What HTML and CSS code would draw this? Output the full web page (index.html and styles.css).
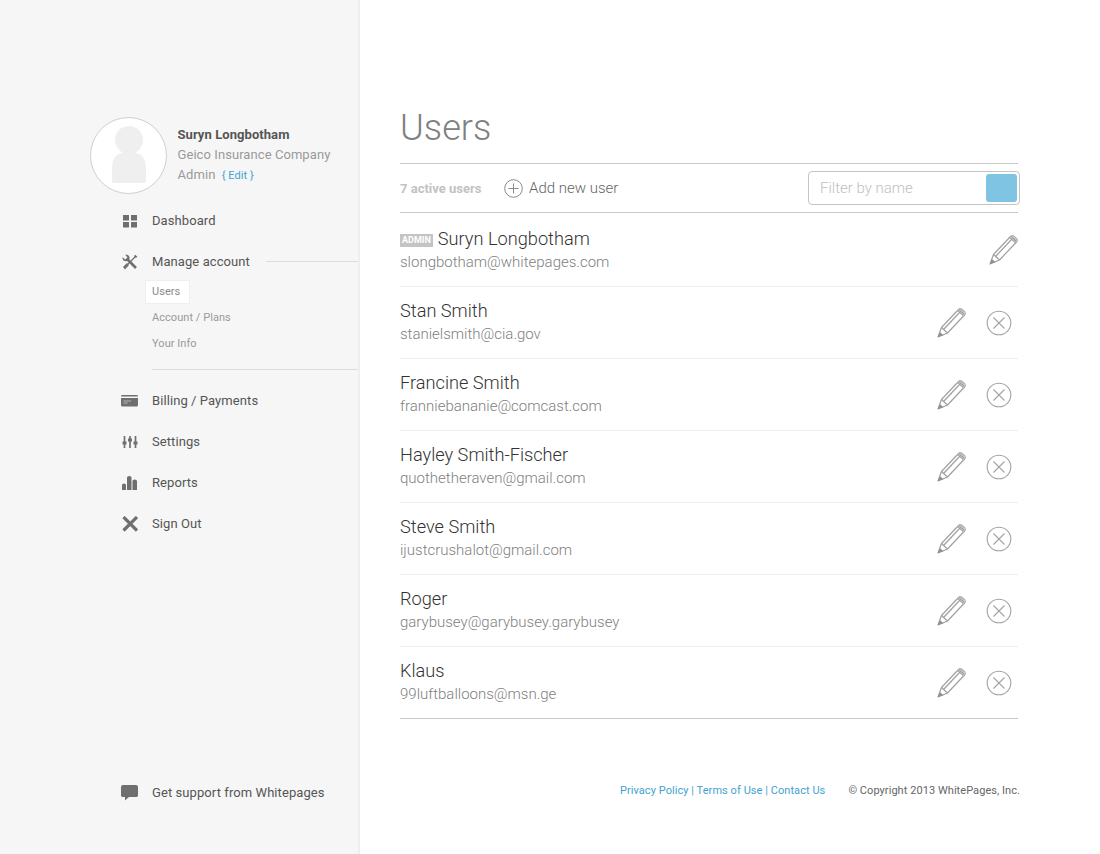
FILE: index.html
```html
<!DOCTYPE html>
<html lang="en">
<head>
    <meta charset="UTF-8">
    <title>Users</title>
    <link rel="stylesheet" href="styles.css">
</head>
<body>
    <svg class="defs" width="0" height="0">
        <symbol id="pencil" viewBox="0 0 30 32">
            <path d="M1 31 L4.500 21.500 L21.500 3.500 Q23 2 24.500 3 L27.800 6 Q29 7.500 27.500 9 L10.500 27 Z" fill="#fff" stroke="#a0a0a0" stroke-width="1.200" stroke-linejoin="round"/>
            <path d="M4.500 21.500 L10.500 27 M7 23 L22.500 6.500" fill="none" stroke="#a0a0a0" stroke-width="1.200"/>
            <path d="M20.500 4.500 L26.500 10 L28 8.500 Q29 7.500 27.800 6 L24.500 3 Q23 2 21.500 3.500 Z" fill="#c4c4c4"/>
            <path d="M20.500 4.500 L26.500 10 M22.300 3.800 L27.300 8.500" fill="none" stroke="#8f8f8f" stroke-width="0.900"/>
            <path d="M1 31 L2.800 26 L6.500 29.200 Z" fill="#8f8f8f"/>
        </symbol>
        <symbol id="remove" viewBox="0 0 26 26">
            <circle cx="13" cy="13" r="11.800" fill="none" stroke="#a3a3a3" stroke-width="1.100"/>
            <path d="M7.500 7.500 L18.500 18.500 M18.500 7.500 L7.500 18.500" fill="none" stroke="#a3a3a3" stroke-width="1.100"/>
        </symbol>
    </svg>

    <div class="layout">
        <aside class="sidebar">
            <div class="profile">
                <div class="avatar">
                    <svg width="75" height="75" viewBox="0 0 75 75">
                        <circle cx="38" cy="22" r="14" fill="#efefef"/>
                        <path d="M21 63 Q21 65 23 65 H53 Q55 65 55 63 V50 Q55 34 38 34 Q21 34 21 50 Z" fill="#efefef"/>
                    </svg>
                </div>
                <div class="profileText">
                    <div class="profileName">Suryn Longbotham</div>
                    <div class="profileLine">Geico Insurance Company</div>
                    <div class="profileLine">Admin <a class="editLink">{ Edit }</a></div>
                </div>
            </div>

            <nav class="nav">
                <a class="navItem">
                    <svg class="navIcon" viewBox="0 0 16 16"><path d="M1 2h6v5.500H1zM9 2h6v5.500H9zM1 9h6v5.500H1zM9 9h6v5.500H9z" fill="#6f6f6f"/></svg>
                    Dashboard
                </a>
                <a class="navItem navOpen">
                    <svg class="navIcon" viewBox="0 0 16 16">
                        <path d="M5 5 L14 14" stroke="#6f6f6f" stroke-width="2.600"/>
                        <path d="M0.500 3 L3 5.500 L5.500 3.500 L3.200 0.800 Q6.500 0 7.500 3 Q8 5 6.500 6.500 Q3.500 8 1.500 6.500 Q0.300 5 0.500 3 Z" fill="#6f6f6f"/>
                        <path d="M2.500 13.500 L13.500 2.500" stroke="#6f6f6f" stroke-width="1.300"/>
                        <path d="M1 13 L3 15.500 L7 11 L5 9 Z" fill="#6f6f6f"/>
                        <path d="M13 0.800 L15.300 2.500 L14 4 L12 2.300 Z" fill="#6f6f6f"/>
                    </svg>
                    Manage account
                </a>
                <div class="subNav">
                    <a class="subItem subActive">Users</a>
                    <a class="subItem">Account / Plans</a>
                    <a class="subItem">Your Info</a>
                </div>
                <a class="navItem">
                    <svg class="navIcon wideIcon" viewBox="0 0 17 16">
                        <path d="M1.500 2 H15.500 Q17 2 17 3 V3.500 H0 V3 Q0 2 1.500 2 Z" fill="#6f6f6f"/>
                        <path d="M0 5 H17 V12 Q17 13.500 15.500 13.500 H1.500 Q0 13.500 0 12 Z" fill="#6f6f6f"/>
                        <path d="M2.500 8 H10 M2.500 10 H6.500" stroke="#b5b5b5" stroke-width="1"/>
                    </svg>
                    Billing / Payments
                </a>
                <a class="navItem">
                    <svg class="navIcon" viewBox="0 0 16 16">
                        <path d="M2.500 2 V14 M8 2 V14 M13.500 2 V14" stroke="#6f6f6f" stroke-width="1.700"/>
                        <path d="M0.500 7.500 H4.500 V10.500 H0.500 Z M6 4.500 H10 V7.500 H6 Z M11.500 7.500 H15.500 V10.500 H11.500 Z" fill="#6f6f6f"/>
                    </svg>
                    Settings
                </a>
                <a class="navItem">
                    <svg class="navIcon" viewBox="0 0 16 16">
                        <path d="M0 10 Q0 8.500 2 8.500 Q4 8.500 4 10 V15 H0 Z M5 2.500 Q5 1 7.200 1 Q9.500 1 9.500 2.500 V15 H5 Z M10.500 6 Q10.500 4.500 12.700 4.500 Q15 4.500 15 6 V15 H10.500 Z" fill="#6f6f6f"/>
                    </svg>
                    Reports
                </a>
                <a class="navItem">
                    <svg class="navIcon" viewBox="0 0 16 16"><path d="M1.500 1 L15 14.500 M15 1 L1.500 14.500" stroke="#6f6f6f" stroke-width="3.200"/></svg>
                    Sign Out
                </a>
            </nav>

            <a class="navItem support">
                <svg class="navIcon wideIcon" viewBox="0 0 17 16"><path d="M2 0 H15 Q17 0 17 2 V10.500 Q17 12 15 12 H8 L4 15.500 V12 H2 Q0 12 0 10.500 V2 Q0 0 2 0 Z" fill="#6f6f6f"/></svg>
                Get support from Whitepages
            </a>
        </aside>

        <main class="content">
            <h1 class="pageTitle">Users</h1>

            <div class="toolbar">
                <span class="activeCount">7 active users</span>
                <a class="addUser">
                    <svg width="19" height="19" viewBox="0 0 19 19">
                        <circle cx="9.500" cy="9.500" r="8.800" fill="none" stroke="#8a8a8a" stroke-width="1"/>
                        <path d="M9.500 4.500 V14.500 M4.500 9.500 H14.500" stroke="#8a8a8a" stroke-width="1"/>
                    </svg>
                    Add new user
                </a>
                <div class="filterBox">
                    <input class="filterInput" type="text" placeholder="Filter by name">
                    <button class="filterButton" type="button"></button>
                </div>
            </div>

            <div class="userList">
                <div class="userRow">
                    <div class="userInfo">
                        <div class="userName"><span class="adminTag">ADMIN</span>Suryn Longbotham</div>
                        <div class="userEmail">slongbotham@whitepages.com</div>
                    </div>
                    <svg class="pencilIcon ownPencil"><use href="#pencil"/></svg>
                </div>
                <div class="userRow">
                    <div class="userInfo">
                        <div class="userName">Stan Smith</div>
                        <div class="userEmail">stanielsmith@cia.gov</div>
                    </div>
                    <svg class="pencilIcon"><use href="#pencil"/></svg>
                    <svg class="removeIcon"><use href="#remove"/></svg>
                </div>
                <div class="userRow">
                    <div class="userInfo">
                        <div class="userName">Francine Smith</div>
                        <div class="userEmail">franniebananie@comcast.com</div>
                    </div>
                    <svg class="pencilIcon"><use href="#pencil"/></svg>
                    <svg class="removeIcon"><use href="#remove"/></svg>
                </div>
                <div class="userRow">
                    <div class="userInfo">
                        <div class="userName">Hayley Smith-Fischer</div>
                        <div class="userEmail">quothetheraven@gmail.com</div>
                    </div>
                    <svg class="pencilIcon"><use href="#pencil"/></svg>
                    <svg class="removeIcon"><use href="#remove"/></svg>
                </div>
                <div class="userRow">
                    <div class="userInfo">
                        <div class="userName">Steve Smith</div>
                        <div class="userEmail">ijustcrushalot@gmail.com</div>
                    </div>
                    <svg class="pencilIcon"><use href="#pencil"/></svg>
                    <svg class="removeIcon"><use href="#remove"/></svg>
                </div>
                <div class="userRow">
                    <div class="userInfo">
                        <div class="userName">Roger</div>
                        <div class="userEmail">garybusey@garybusey.garybusey</div>
                    </div>
                    <svg class="pencilIcon"><use href="#pencil"/></svg>
                    <svg class="removeIcon"><use href="#remove"/></svg>
                </div>
                <div class="userRow">
                    <div class="userInfo">
                        <div class="userName">Klaus</div>
                        <div class="userEmail">99luftballoons@msn.ge</div>
                    </div>
                    <svg class="pencilIcon"><use href="#pencil"/></svg>
                    <svg class="removeIcon"><use href="#remove"/></svg>
                </div>
            </div>

            <footer class="footer">
                <span class="footerLinks">Privacy Policy | Terms of Use | Contact Us</span>
                <span class="copyright">© Copyright 2013 WhitePages, Inc.</span>
            </footer>
        </main>
    </div>
</body>
</html>
```

FILE: styles.css
```css
* {
    box-sizing: border-box;
}
body {
    font-family: Roboto, "Liberation Sans", sans-serif;
    background-color: #fff;
    margin: 0;
}
.defs {
    display: block;
    height: 0;
}
.layout {
    display: flex;
    height: 854px;
}
.sidebar {
    width: 360px;
    flex-shrink: 0;
    display: flex;
    flex-direction: column;
    background-color: #f6f6f6;
    border-right: 2px solid #eeeeee;
    padding: 117px 0 41px 90px;
}
.profile {
    display: flex;
    align-items: center;
    gap: 11px;
}
.avatar {
    width: 77px;
    height: 77px;
    border: 1px solid #cfcfcf;
    border-radius: 50%;
    background-color: #fff;
}
.avatar svg {
    display: block;
}
.profileText {
    font-size: 13px;
    line-height: 20px;
    color: #9a9a9a;
    letter-spacing: 0.07px;
    margin-left: -0.5px;
}
.profileName {
    font-weight: 700;
    color: #555;
}
.profileLine {
    font-size: 13px;
}
.editLink {
    color: #3fa3cf;
    font-size: 11px;
    margin-left: 3px;
}
.nav {
    padding-top: 6px;
}
.navItem {
    display: flex;
    align-items: center;
    height: 41px;
    padding-left: 32px;
    font-size: 13px;
    color: #555;
    letter-spacing: 0.08px;
}
.navIcon {
    width: 16px;
    height: 16px;
    margin-right: 14px;
    flex-shrink: 0;
}
.wideIcon {
    width: 17px;
    margin-left: -1px;
}
.navOpen::after {
    content: "";
    flex: 1;
    height: 1px;
    background-color: #dcdcdc;
    margin-left: 16px;
}
.subNav {
    margin-left: 62px;
    margin-bottom: 10px;
    padding: 0 0 12px;
    border-bottom: 1px solid #dcdcdc;
    display: flex;
    flex-direction: column;
    align-items: flex-start;
}
.subItem {
    height: 26px;
    line-height: 26px;
    font-size: 11px;
    letter-spacing: 0.05px;
    color: #9a9a9a;
}
.subActive {
    height: 24px;
    line-height: 22px;
    margin: -2px 0 1px -7px;
    padding: 0 9px 0 6px;
    background-color: #fff;
    border: 1px solid #efefef;
    color: #8a8a8a;
}
.support {
    margin-top: auto;
}
.content {
    width: 620px;
    margin-left: 40px;
    display: flex;
    flex-direction: column;
}
.pageTitle {
    margin: 105px 0 0;
    height: 59px;
    font-size: 36.200px;
    line-height: 46px;
    font-weight: 300;
    color: #808080;
    width: 618px;
    border-bottom: 1px solid #c8c8c8;
}
.toolbar {
    display: flex;
    align-items: center;
    height: 49px;
    width: 618px;
    border-bottom: 1px solid #c8c8c8;
}
.activeCount {
    font-size: 13px;
    font-weight: 700;
    color: #c2c2c2;
    width: 104px;
}
.addUser {
    display: flex;
    align-items: center;
    gap: 6px;
    font-size: 15px;
    font-weight: 300;
    color: #666;
}
.filterBox {
    display: flex;
    align-items: center;
    justify-content: space-between;
    width: 212px;
    height: 34px;
    margin-left: auto;
    margin-right: -2px;
    border: 1px solid #c4c4c4;
    border-radius: 4px;
    padding-right: 2px;
    padding-left: 11px;
}
.filterInput {
    border: none;
    outline: none;
    width: 150px;
    padding: 0;
    font-family: inherit;
    font-size: 15px;
    font-weight: 300;
    background: none;
}
.filterInput::placeholder {
    color: #c0c0c0;
}
.filterButton {
    width: 31px;
    height: 28px;
    padding: 0;
    border: none;
    border-radius: 3px;
    background-color: #7fc5e3;
}
.userList {
    width: 618px;
    border-bottom: 1px solid #c8c8c8;
}
.userRow {
    display: flex;
    align-items: center;
    height: 72px;
    padding-bottom: 1px;
    border-bottom: 1px solid #eeeeee;
}
.userRow:first-child {
    height: 74px;
    padding-top: 1px;
    padding-bottom: 0;
}
.userRow:last-child {
    border-bottom: none;
    height: 71px;
}
.userInfo {
    flex: 1;
}
.userName {
    font-size: 18.200px;
    line-height: 24px;
    font-weight: 300;
    color: #333;
}
.userEmail {
    font-size: 15px;
    line-height: 22px;
    font-weight: 300;
    color: #808080;
}
.adminTag {
    display: inline-block;
    vertical-align: 2px;
    height: 13px;
    line-height: 13px;
    padding: 0 2px;
    margin-right: 5px;
    background-color: #c4c4c4;
    color: #fff;
    font-size: 9px;
    font-weight: 700;
}
.pencilIcon {
    width: 30px;
    height: 32px;
    margin-right: 19px;
}
.ownPencil {
    margin-top: -2px;
    margin-right: -1px;
}
.removeIcon {
    width: 26px;
    height: 26px;
    margin-top: 1px;
    margin-right: 6px;
}
.footer {
    display: flex;
    justify-content: flex-end;
    gap: 23px;
    width: 620px;
    margin-top: 65px;
    font-size: 11px;
    line-height: 14px;
    letter-spacing: 0.06px;
}
.footerLinks {
    color: #3fa3cf;
}
.copyright {
    color: #666;
}
```
